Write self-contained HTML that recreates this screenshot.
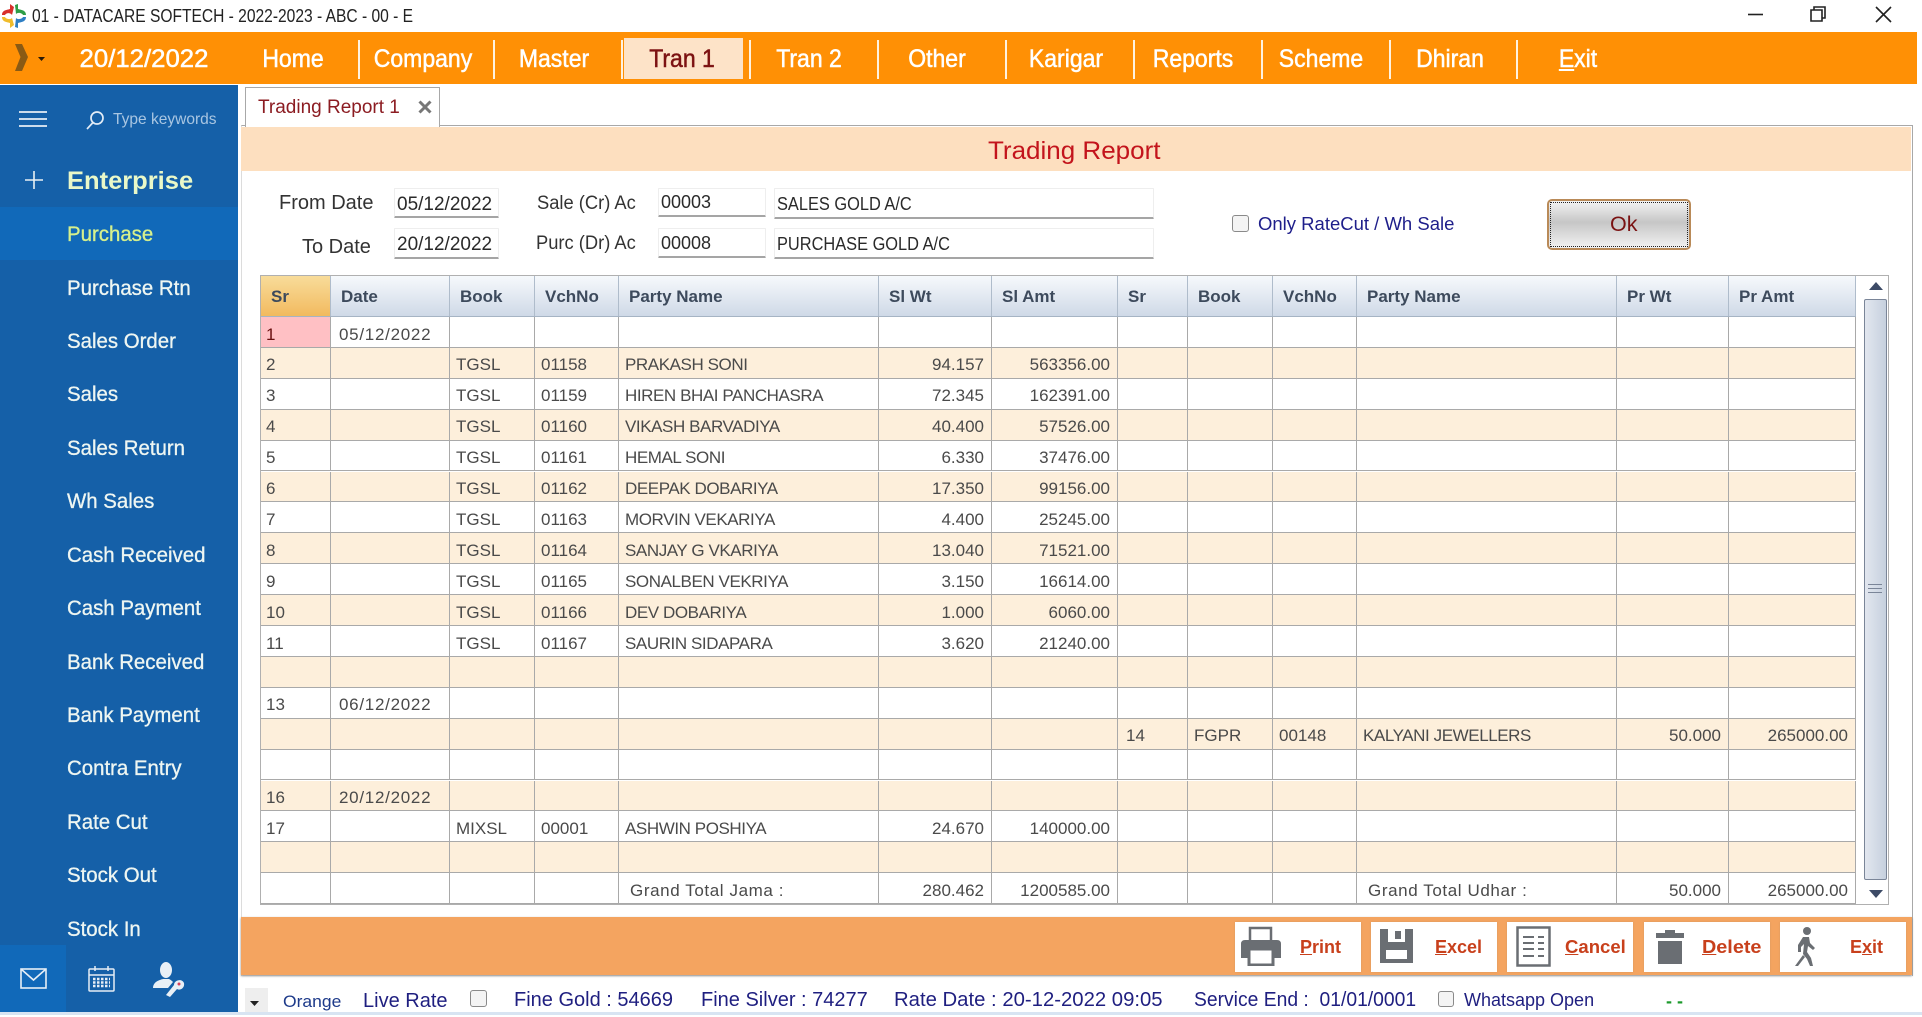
<!DOCTYPE html>
<html><head><meta charset="utf-8"><title>Trading Report</title>
<style>
html,body{margin:0;padding:0;width:1922px;height:1015px;overflow:hidden;background:#fff;font-family:"Liberation Sans",sans-serif}
.a{position:absolute;white-space:nowrap;line-height:30px;transform-origin:left center}
.box{position:absolute}
.m{font-size:25px;color:#fff;-webkit-text-stroke:.5px #fff;transform:translateX(-50%) scaleX(.92);transform-origin:center;top:44px}
.sep{position:absolute;top:40px;height:39px;width:2px;background:#fff2e0}
.s{left:67px;font-size:21px;color:#eef6f2;-webkit-text-stroke:.3px #eef6f2;transform:scaleX(.972)}
.in{position:absolute;background:#fff;border:1px solid #eee;border-bottom:2px solid #a5a5a5;box-sizing:border-box;border-radius:1px}
.f{font-size:19px;color:#2a2a2a}
.l{font-size:20px;color:#333}
.r{position:absolute;left:261px;width:1595px;height:30.9px;display:grid;grid-template-columns:70px 119px 85px 84px 260px 113px 126px 70px 85px 84px 260px 112px 127px;background:#fff;box-sizing:border-box;border-bottom:1.5px solid #a9a9a9}
.r.o{background:#fdefdb}
.r i,.h i{font-style:normal;display:block;box-sizing:border-box;border-right:1.5px solid #a9a9a9;font-size:17px;color:#4a4a4a;line-height:30px;padding-left:6px;white-space:nowrap;overflow:hidden}
.r i{padding-top:2.5px}
.r i:nth-child(1){padding-left:5px}
.r i:nth-child(2){padding-left:8px;letter-spacing:.72px}
.r i:nth-child(8){padding-left:8px}
.r i:nth-child(5),.r i:nth-child(11){letter-spacing:-.42px}
.r i:nth-child(6),.r i:nth-child(7),.r i:nth-child(12),.r i:nth-child(13){text-align:right;padding-right:7px;padding-left:0}
.h{position:absolute;left:261px;top:275px;width:1595px;height:42px;display:grid;grid-template-columns:70px 119px 85px 84px 260px 113px 126px 70px 85px 84px 260px 112px 127px;box-sizing:border-box;border-top:1.5px solid #b0b0b0;border-bottom:1.5px solid #a6b4c4;background:linear-gradient(#f6f9fc,#cfd9e7)}
.h i{font-weight:700;color:#3d4a5c;line-height:41px;padding-left:10px;border-right:1.5px solid #afbccb;font-size:17px}
.h i:first-child{background:linear-gradient(#f8dc9a,#f2ba5f)}
.bt{position:absolute;top:922px;width:126px;height:50px;background:#fff;box-shadow:0 0 2px #d89a60}
.bl{font-size:18px;font-weight:700;color:#c8401c;top:932px}
.st{font-size:20px;color:#1f1f80;top:985px}
.cb{position:absolute;width:16px;height:16px;background:#f4f4f4;border:1.5px solid #8a8a8a;border-radius:3px;box-sizing:border-box}
</style></head><body>

<!-- title bar -->
<svg class="box" style="left:2px;top:4px" width="24" height="24" viewBox="0 0 24 24">
<path d="M0 11 C0 6 5 6 8 5 L8 0 L12 3 L10 11 C8 8 4 9 3 11 Z" fill="#d8302c"/>
<path d="M13 1 L16 0 L16 5 C19 6 24 6 24 11 L21 11 C20 9 16 8 14 10 Z" fill="#2f9d46"/>
<path d="M0 13 L3 13 C4 15 8 16 10 14 L12 21 L8 24 L8 19 C5 18 0 18 0 13 Z" fill="#f0bc2c"/>
<path d="M24 13 L21 13 C20 15 16 16 14 14 L13 23 L16 24 L16 19 C19 18 24 18 24 13 Z" fill="#2f7fc4"/>
</svg>
<div class="a" style="left:32px;top:1px;font-size:18px;color:#222;transform:scaleX(.865)">01 - DATACARE SOFTECH - 2022-2023 - ABC - 00 - E</div>
<svg class="box" style="left:1740px;top:0" width="170" height="30" fill="none" stroke="#222" stroke-width="1.6">
<path d="M8 14.5 H23"/><path d="M71 10 H82 V21 H71 Z M74 10 V7 H85 V18 H82" />
<path d="M136 7 L151 22 M151 7 L136 22"/>
</svg>

<!-- orange menu -->
<div class="box" style="left:0;top:32px;width:1917px;height:52px;background:#ff9005"></div>
<svg class="box" style="left:12px;top:42px" width="34" height="32"><path d="M3 2 L10 2 L16 15 L10 29 L3 29 L8.500 15 Z" fill="#8a5a14"/><path d="M26 15 H33 L29.500 19 Z" fill="#2a1a08"/></svg>
<div class="a m" style="left:144px;transform:translateX(-50%) scaleX(1.03)">20/12/2022</div>
<div class="a m" style="left:293px">Home</div>
<div class="sep" style="left:358px"></div>
<div class="a m" style="left:423px">Company</div>
<div class="sep" style="left:493px"></div>
<div class="a m" style="left:554px">Master</div>
<div class="sep" style="left:621px"></div>
<div class="box" style="left:624px;top:38px;width:119px;height:41px;background:#fde3c8"></div>
<div class="a m" style="left:682px;color:#7c1212;-webkit-text-stroke:.5px #7c1212">Tran 1</div>
<div class="sep" style="left:749px"></div>
<div class="a m" style="left:809px">Tran 2</div>
<div class="sep" style="left:877px"></div>
<div class="a m" style="left:937px">Other</div>
<div class="sep" style="left:1005px"></div>
<div class="a m" style="left:1066px">Karigar</div>
<div class="sep" style="left:1133px"></div>
<div class="a m" style="left:1193px">Reports</div>
<div class="sep" style="left:1261px"></div>
<div class="a m" style="left:1321px">Scheme</div>
<div class="sep" style="left:1389px"></div>
<div class="a m" style="left:1450px">Dhiran</div>
<div class="sep" style="left:1516px"></div>
<div class="a m" style="left:1578px"><u>E</u>xit</div>

<!-- sidebar -->
<div class="box" style="left:0;top:85px;width:238px;height:927px;background:#1560a8"></div>
<div class="box" style="left:0;top:207px;width:238px;height:53px;background:#1169b9"></div>
<svg class="box" style="left:19px;top:110px" width="28" height="18" stroke="#e6eef6" stroke-width="1.8"><path d="M0 2 H28 M0 9 H28 M0 16 H28"/></svg>
<svg class="box" style="left:85px;top:110px" width="20" height="20" fill="none" stroke="#e2ecf6" stroke-width="1.7"><circle cx="12" cy="8" r="6"/><path d="M8 12.500 L2 19"/></svg>
<div class="a" style="left:113px;top:105px;font-size:16px;color:#a9c6e2;transform:scaleX(.97)">Type keywords</div>
<svg class="box" style="left:25px;top:171px" width="18" height="18" stroke="#e8f0f4" stroke-width="1.6"><path d="M0 9 H18 M9 0 V18"/></svg>
<div class="a" style="left:67px;top:166px;font-size:25px;font-weight:700;color:#e9f8c8;transform:scaleX(1.02)">Enterprise</div>
<div class="a s" style="top:220px;color:#d6f08c;-webkit-text-stroke:.3px #d6f08c">Purchase</div>
<div class="a s" style="top:274px">Purchase Rtn</div>
<div class="a s" style="top:327px">Sales Order</div>
<div class="a s" style="top:380px">Sales</div>
<div class="a s" style="top:434px">Sales Return</div>
<div class="a s" style="top:487px">Wh Sales</div>
<div class="a s" style="top:541px">Cash Received</div>
<div class="a s" style="top:594px">Cash Payment</div>
<div class="a s" style="top:648px">Bank Received</div>
<div class="a s" style="top:701px">Bank Payment</div>
<div class="a s" style="top:754px">Contra Entry</div>
<div class="a s" style="top:808px">Rate Cut</div>
<div class="a s" style="top:861px">Stock Out</div>
<div class="a s" style="top:915px">Stock In</div>
<div class="box" style="left:0;top:945px;width:66px;height:67px;background:#1169b9"></div>
<svg class="box" style="left:20px;top:968px" width="27" height="21" fill="none" stroke="#e6eef6" stroke-width="1.6"><rect x="1" y="1" width="25" height="19"/><path d="M1 1 L13.500 12 L26 1"/></svg>
<svg class="box" style="left:88px;top:965px" width="27" height="27" fill="none" stroke="#e6eef6" stroke-width="1.5"><rect x="1" y="4" width="25" height="22" rx="1"/><path d="M1 10 H26 M7 1 V6 M20 1 V6"/><path d="M5 14 H22 M5 17.500 H22 M5 21 H22" stroke-dasharray="2.500 1.500" stroke-width="2.500"/></svg>
<svg class="box" style="left:152px;top:961px" width="34" height="36" fill="#e9f0f6"><ellipse cx="14" cy="9" rx="6" ry="8"/><path d="M1 27 C1 21 7 19 11 18 L17 18 C19 19 20 20 21 21 L16 27 Z"/><path d="M14 34 L22 24 C22 19 30 17 32 22 C33 27 28 30 25 28 L18 36 Z"/><circle cx="27" cy="23" r="1.500" fill="#d8405a"/></svg>

<!-- tab -->
<div class="box" style="left:245px;top:87px;width:195px;height:40px;background:#fff;border:1.5px solid #a8a8a8;border-bottom:0;box-sizing:border-box;z-index:2"></div>
<div class="a" style="left:258px;top:93px;font-size:19px;color:#8c1c22;z-index:3">Trading Report 1</div>
<svg class="box" style="left:418px;top:100px;z-index:3" width="14" height="14" stroke="#777" stroke-width="3"><path d="M1.500 1.500 L12.500 12.500 M12.500 1.500 L1.500 12.500"/></svg>

<!-- panel -->
<div class="box" style="left:241px;top:125px;width:1672px;height:851px;border:1.5px solid #a8a8a8;border-bottom:0;border-left-color:#dcdcdc;box-sizing:border-box"></div>
<div class="box" style="left:241px;top:127px;width:1670px;height:44px;background:#fddfbf"></div>
<div class="a" style="left:988px;top:136px;font-size:25px;color:#c3141c;transform:scaleX(1.04)">Trading Report</div>

<!-- form -->
<div class="a l" style="left:279px;top:188px">From Date</div>
<div class="a l" style="left:302px;top:232px">To Date</div>
<div class="in" style="left:394px;top:188px;width:105px;height:30px"></div>
<div class="a f" style="left:397px;top:190px">05/12/2022</div>
<div class="in" style="left:394px;top:228px;width:105px;height:31px"></div>
<div class="a f" style="left:397px;top:230px">20/12/2022</div>
<div class="a f" style="left:537px;top:189px;color:#333;transform:scaleX(.965)">Sale (Cr) Ac</div>
<div class="a f" style="left:536px;top:229px;color:#333;transform:scaleX(.965)">Purc (Dr) Ac</div>
<div class="in" style="left:658px;top:188px;width:108px;height:29px"></div>
<div class="a" style="left:661px;top:187px;font-size:18px;color:#2a2a2a">00003</div>
<div class="in" style="left:658px;top:228px;width:108px;height:30px"></div>
<div class="a" style="left:661px;top:228px;font-size:18px;color:#2a2a2a">00008</div>
<div class="in" style="left:774px;top:188px;width:380px;height:31px"></div>
<div class="a" style="left:777px;top:189px;font-size:18px;color:#2a2a2a;transform:scaleX(.91)">SALES GOLD A/C</div>
<div class="in" style="left:774px;top:228px;width:380px;height:31px"></div>
<div class="a" style="left:777px;top:229px;font-size:18px;color:#2a2a2a;transform:scaleX(.91)">PURCHASE GOLD A/C</div>
<div class="cb" style="left:1232px;top:215px;width:17px;height:17px"></div>
<div class="a" style="left:1258px;top:209px;font-size:18.500px;color:#1e1e8a">Only RateCut / Wh Sale</div>
<div class="box" style="left:1547px;top:199px;width:144px;height:51px;box-sizing:border-box;border:2px solid #b98a58;border-radius:5px;background:linear-gradient(#f4f4f4,#c6c6c6 45%,#f2f2f2)"><div style="position:absolute;inset:1px;border:1.5px dotted #222"></div></div>
<div class="a" style="left:1610px;top:209px;font-size:21.500px;color:#7a1212">Ok</div>

<!-- grid -->
<div class="box" style="left:260px;top:275px;width:1629px;height:630px;border:1.5px solid #b0b0b0;box-sizing:border-box"></div>
<div class="h"><i>Sr</i><i>Date</i><i>Book</i><i>VchNo</i><i>Party Name</i><i>Sl Wt</i><i>Sl Amt</i><i>Sr</i><i>Book</i><i>VchNo</i><i>Party Name</i><i>Pr Wt</i><i>Pr Amt</i></div>

<div class="r" style="top:317px"><i style="background:#ffc0c4;color:#6a1010">1</i><i>05/12/2022</i><i></i><i></i><i></i><i></i><i></i><i></i><i></i><i></i><i></i><i></i><i></i></div>
<div class="r o" style="top:347.9px"><i>2</i><i></i><i>TGSL</i><i>01158</i><i>PRAKASH SONI</i><i>94.157</i><i>563356.00</i><i></i><i></i><i></i><i></i><i></i><i></i></div>
<div class="r" style="top:378.8px"><i>3</i><i></i><i>TGSL</i><i>01159</i><i>HIREN BHAI PANCHASRA</i><i>72.345</i><i>162391.00</i><i></i><i></i><i></i><i></i><i></i><i></i></div>
<div class="r o" style="top:409.7px"><i>4</i><i></i><i>TGSL</i><i>01160</i><i>VIKASH BARVADIYA</i><i>40.400</i><i>57526.00</i><i></i><i></i><i></i><i></i><i></i><i></i></div>
<div class="r" style="top:440.6px"><i>5</i><i></i><i>TGSL</i><i>01161</i><i>HEMAL SONI</i><i>6.330</i><i>37476.00</i><i></i><i></i><i></i><i></i><i></i><i></i></div>
<div class="r o" style="top:471.5px"><i>6</i><i></i><i>TGSL</i><i>01162</i><i>DEEPAK DOBARIYA</i><i>17.350</i><i>99156.00</i><i></i><i></i><i></i><i></i><i></i><i></i></div>
<div class="r" style="top:502.4px"><i>7</i><i></i><i>TGSL</i><i>01163</i><i>MORVIN VEKARIYA</i><i>4.400</i><i>25245.00</i><i></i><i></i><i></i><i></i><i></i><i></i></div>
<div class="r o" style="top:533.3px"><i>8</i><i></i><i>TGSL</i><i>01164</i><i>SANJAY G VKARIYA</i><i>13.040</i><i>71521.00</i><i></i><i></i><i></i><i></i><i></i><i></i></div>
<div class="r" style="top:564.2px"><i>9</i><i></i><i>TGSL</i><i>01165</i><i>SONALBEN VEKRIYA</i><i>3.150</i><i>16614.00</i><i></i><i></i><i></i><i></i><i></i><i></i></div>
<div class="r o" style="top:595.1px"><i>10</i><i></i><i>TGSL</i><i>01166</i><i>DEV DOBARIYA</i><i>1.000</i><i>6060.00</i><i></i><i></i><i></i><i></i><i></i><i></i></div>
<div class="r" style="top:626px"><i>11</i><i></i><i>TGSL</i><i>01167</i><i>SAURIN SIDAPARA</i><i>3.620</i><i>21240.00</i><i></i><i></i><i></i><i></i><i></i><i></i></div>
<div class="r o" style="top:656.9px"><i></i><i></i><i></i><i></i><i></i><i></i><i></i><i></i><i></i><i></i><i></i><i></i><i></i></div>
<div class="r" style="top:687.8px"><i>13</i><i>06/12/2022</i><i></i><i></i><i></i><i></i><i></i><i></i><i></i><i></i><i></i><i></i><i></i></div>
<div class="r o" style="top:718.7px"><i></i><i></i><i></i><i></i><i></i><i></i><i></i><i>14</i><i>FGPR</i><i>00148</i><i>KALYANI JEWELLERS</i><i>50.000</i><i>265000.00</i></div>
<div class="r" style="top:749.6px"><i></i><i></i><i></i><i></i><i></i><i></i><i></i><i></i><i></i><i></i><i></i><i></i><i></i></div>
<div class="r o" style="top:780.5px"><i>16</i><i>20/12/2022</i><i></i><i></i><i></i><i></i><i></i><i></i><i></i><i></i><i></i><i></i><i></i></div>
<div class="r" style="top:811.4px"><i>17</i><i></i><i>MIXSL</i><i>00001</i><i>ASHWIN POSHIYA</i><i>24.670</i><i>140000.00</i><i></i><i></i><i></i><i></i><i></i><i></i></div>
<div class="r o" style="top:842.3px"><i></i><i></i><i></i><i></i><i></i><i></i><i></i><i></i><i></i><i></i><i></i><i></i><i></i></div>
<div class="r" style="top:873.2px"><i></i><i></i><i></i><i></i><i style="padding-left:11px;letter-spacing:.6px">Grand Total Jama :</i><i>280.462</i><i>1200585.00</i><i></i><i></i><i></i><i style="padding-left:11px;letter-spacing:.6px">Grand Total Udhar :</i><i>50.000</i><i>265000.00</i></div>

<!-- scrollbar -->
<svg class="box" style="left:1868px;top:281px" width="16" height="10"><path d="M1 9 L8 1 L15 9 Z" fill="#3c4a66"/></svg>
<div class="box" style="left:1864px;top:299px;width:23px;height:581px;box-sizing:border-box;border:1.5px solid #7a8598;border-radius:2px;background:linear-gradient(90deg,#e2e7ef,#c6d0de)"></div>
<svg class="box" style="left:1868px;top:583px" width="14" height="12" stroke="#7a8598"><path d="M0 1.500 H14 M0 5.500 H14 M0 9.500 H14"/></svg>
<svg class="box" style="left:1868px;top:889px" width="16" height="10"><path d="M1 1 L8 9 L15 1 Z" fill="#3c4a66"/></svg>

<!-- bottom bar -->
<div class="box" style="left:241px;top:917px;width:1671px;height:58px;background:#f4a460;box-shadow:0 1px 2px #888"></div>
<div class="bt" style="left:1235px"></div>
<div class="bt" style="left:1371px"></div>
<div class="bt" style="left:1507px"></div>
<div class="bt" style="left:1644px"></div>
<div class="bt" style="left:1780px"></div>
<svg class="box" style="left:1240px;top:926px" width="42" height="40" fill="#6a6e73"><path d="M10 15 V2 H31 V15" fill="none" stroke="#6a6e73" stroke-width="2.500"/><path d="M5 14 H37 Q41 14 41 18 V32 H33 V23 H9 V32 H1 V18 Q1 14 5 14 Z"/><path d="M9 23 H33 V39 H9 Z" fill="#fff" stroke="#6a6e73" stroke-width="3"/></svg>
<svg class="box" style="left:1380px;top:929px" width="34" height="35" fill="#6a6e73"><path d="M0 0 H33 V34 H0 Z M8 0 V13 H25 V0 Z M6 21 V30 H27 V21 Z" fill-rule="evenodd"/><rect x="15" y="2" width="6" height="8"/></svg>
<svg class="box" style="left:1516px;top:926px" width="35" height="41"><rect x="1.500" y="1.500" width="32" height="38" fill="#fff" stroke="#6a6e73" stroke-width="2.500"/><path d="M7 11 H18 M22 11 H28 M7 17 H18 M22 17 H28 M7 23 H18 M22 23 H28 M7 30 H18 M22 30 H28" stroke="#6a6e73" stroke-width="2"/></svg>
<svg class="box" style="left:1655px;top:929px" width="30" height="36" fill="#6a6e73"><path d="M10 1 H20 V4 H29 V9 H1 V4 H10 Z"/><path d="M3 12 H27 V35 H3 Z"/></svg>
<svg class="box" style="left:1795px;top:926px" width="24" height="41" fill="#6a6e73"><circle cx="12" cy="5" r="4"/><path d="M8 11 H14 L15 17 L20 22 L18 24 L13 20 L12 26 L16 32 L18 40 L15 40 L12 33 L8 28 L9 18 L6 21 L6 26 L3 26 L3 19 Z"/><path d="M8 29 L10 31 L3 40 L0 40 Z"/></svg>
<div class="a bl" style="left:1300px"><u>P</u>rint</div>
<div class="a bl" style="left:1435px"><u>E</u>xcel</div>
<div class="a bl" style="left:1565px;transform:scaleX(1.03)"><u>C</u>ancel</div>
<div class="a bl" style="left:1702px;transform:scaleX(1.1)"><u>D</u>elete</div>
<div class="a bl" style="left:1850px">E<u>x</u>it</div>

<!-- status -->
<div class="box" style="left:245px;top:988px;width:23px;height:24px;background:#eee"></div>
<svg class="box" style="left:250px;top:1001px" width="10" height="6"><path d="M0 0 H9 L4.500 5 Z" fill="#222"/></svg>
<div class="a" style="left:283px;top:987px;font-size:16.500px;color:#1d3a8a;transform:scaleX(1.06)">Orange</div>
<div class="a st" style="left:363px;top:986px">Live Rate</div>
<div class="cb" style="left:470px;top:990px;width:17px;height:17px"></div>
<div class="a st" style="left:514px">Fine Gold : 54669</div>
<div class="a st" style="left:701px">Fine Silver : 74277</div>
<div class="a st" style="left:894px;transform:scaleX(1.015)">Rate Date : 20-12-2022 09:05</div>
<div class="a st" style="left:1194px;transform:scaleX(.965)">Service End :&nbsp; 01/01/0001</div>
<div class="cb" style="left:1438px;top:991px"></div>
<div class="a" style="left:1464px;top:985px;font-size:18px;color:#1f1f80">Whatsapp Open</div>
<div class="a" style="left:1666px;top:986px;font-size:18px;font-weight:700;color:#1c9a2c">- -</div>
<div class="box" style="left:0;top:1012px;width:1922px;height:3px;background:#d8e4f2"></div>
</body></html>
